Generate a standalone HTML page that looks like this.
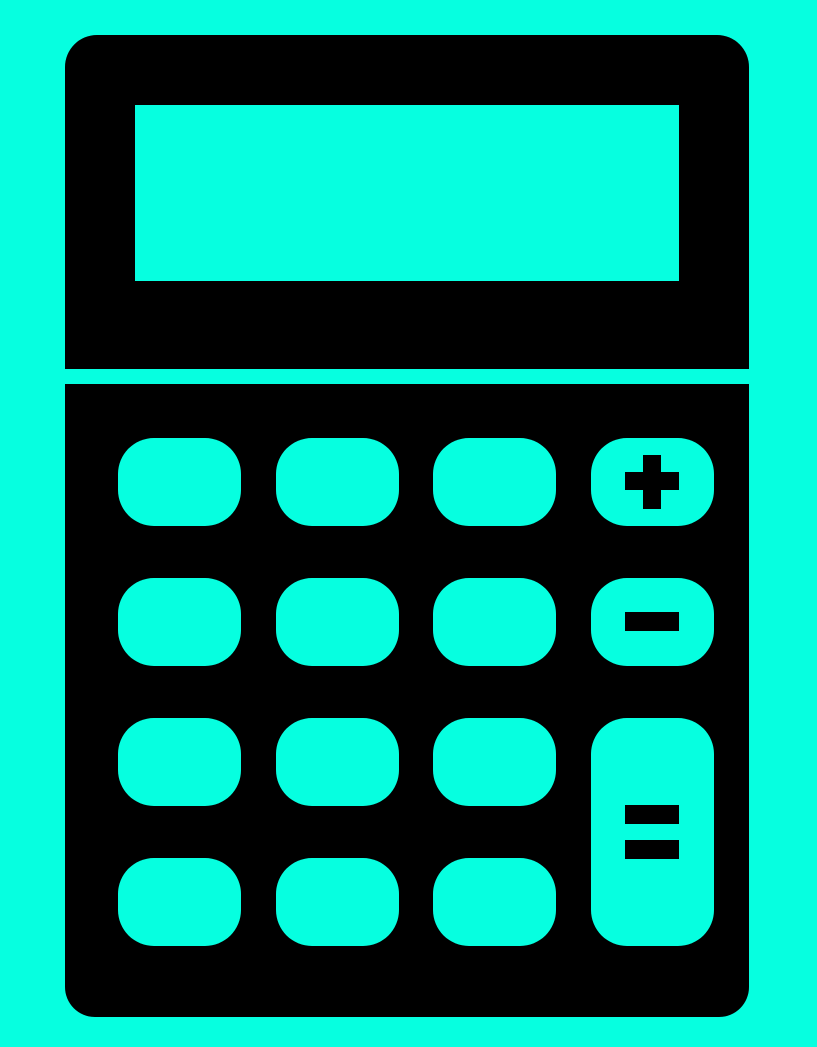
<!DOCTYPE html>
<html><head><style>
body{margin:0;width:817px;height:1047px;background:#06ffe0;position:relative;overflow:hidden}
div{position:absolute}
.k{background:#000}
.b{background:#06ffe0;border-radius:36px;width:123px;height:88px}
</style></head><body>
<div class="k" style="left:65px;top:35px;width:684px;height:334px;border-radius:32px 32px 0 0"></div>
<div style="left:135px;top:105px;width:544px;height:176px;background:#06ffe0"></div>
<div class="k" style="left:65px;top:384px;width:684px;height:633px;border-radius:0 0 30px 30px"></div>
<div class="b" style="left:118px;top:438px"></div>
<div class="b" style="left:276px;top:438px"></div>
<div class="b" style="left:433px;top:438px"></div>
<div class="b" style="left:591px;top:438px"></div>
<div class="b" style="left:118px;top:578px"></div>
<div class="b" style="left:276px;top:578px"></div>
<div class="b" style="left:433px;top:578px"></div>
<div class="b" style="left:591px;top:578px"></div>
<div class="b" style="left:118px;top:718px"></div>
<div class="b" style="left:276px;top:718px"></div>
<div class="b" style="left:433px;top:718px"></div>
<div class="b" style="left:591px;top:718px;height:228px"></div>
<div class="b" style="left:118px;top:858px"></div>
<div class="b" style="left:276px;top:858px"></div>
<div class="b" style="left:433px;top:858px"></div>
<div class="k" style="left:643px;top:455px;width:18px;height:54px"></div>
<div class="k" style="left:625px;top:472px;width:54px;height:18px"></div>
<div class="k" style="left:625px;top:612px;width:54px;height:19px"></div>
<div class="k" style="left:625px;top:805px;width:54px;height:19px"></div>
<div class="k" style="left:625px;top:840px;width:54px;height:19px"></div>
</body></html>
